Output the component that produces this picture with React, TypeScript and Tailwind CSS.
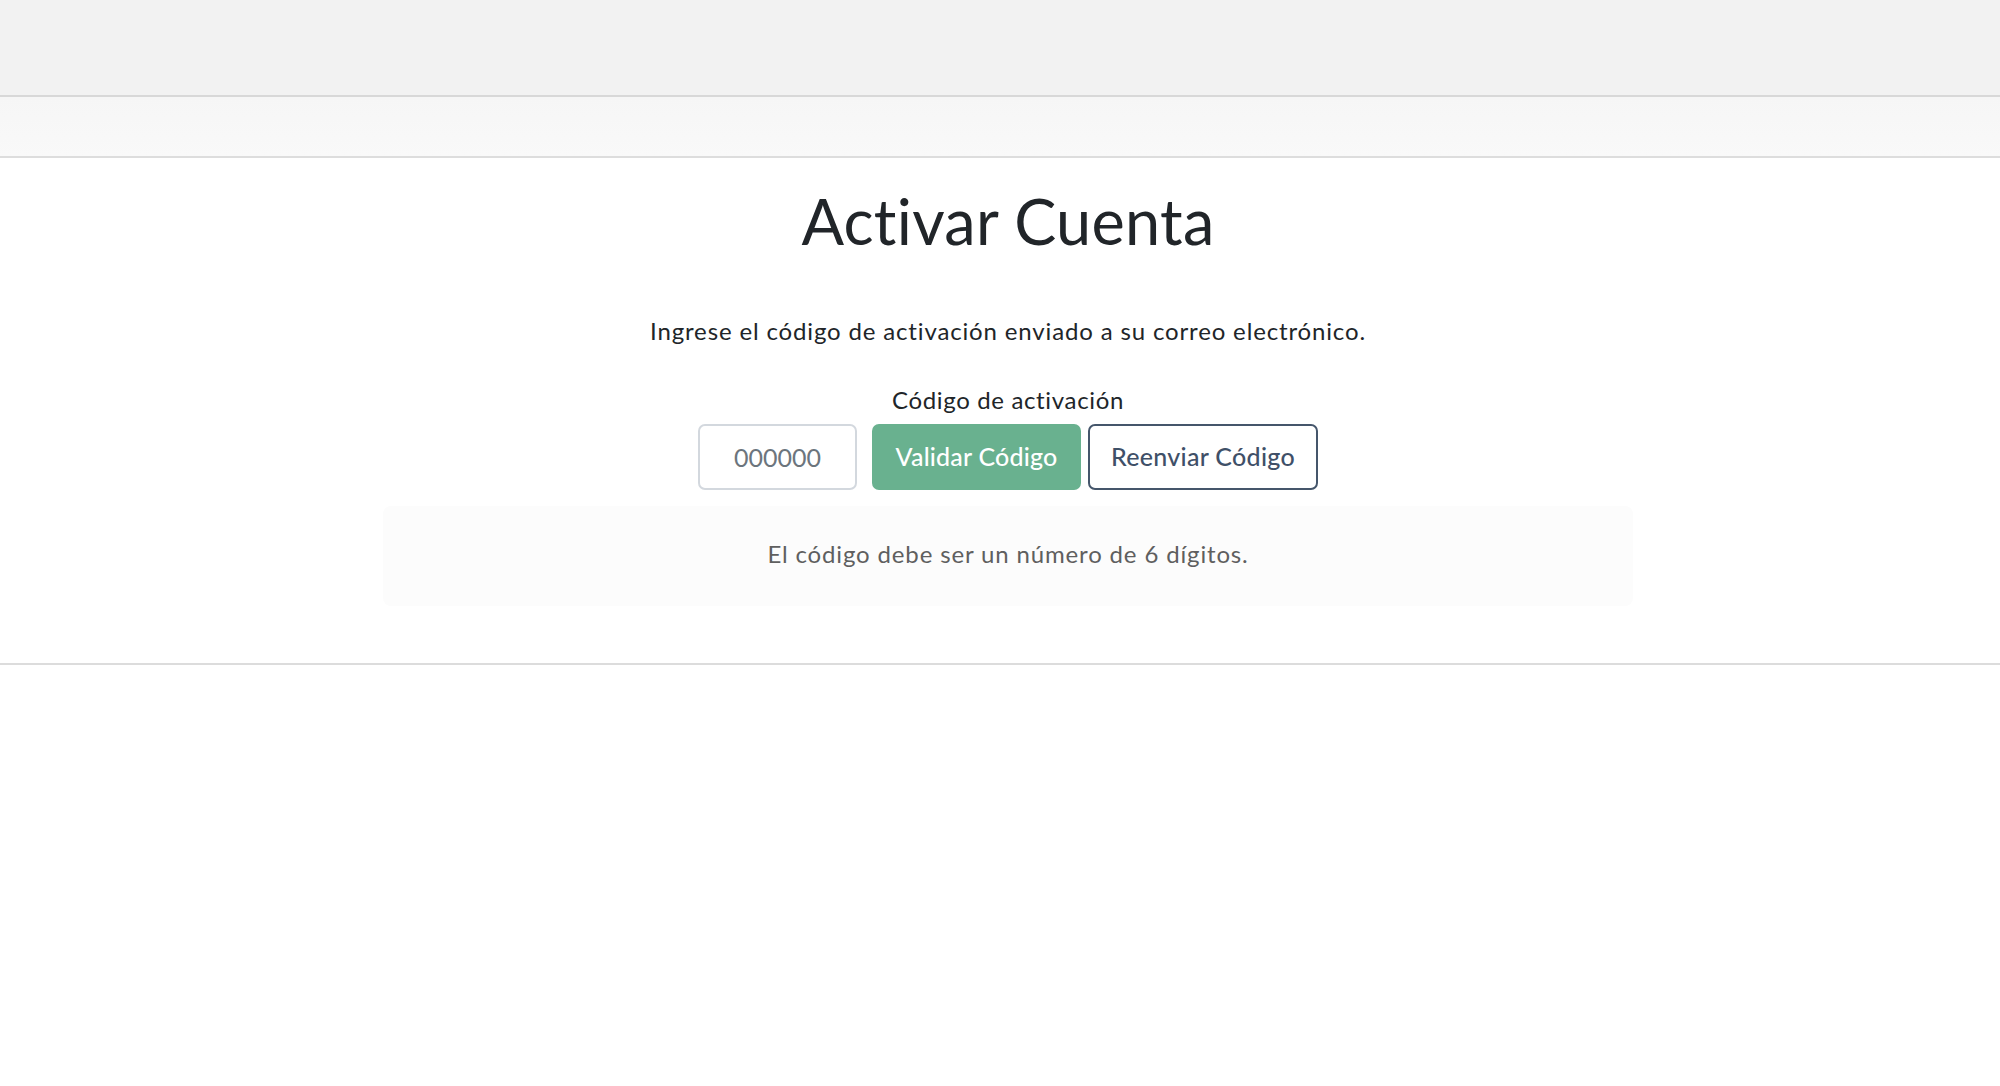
export default function App() {
  return (
    <div className="min-h-screen bg-white font-['Lato','Open_Sans',sans-serif] text-[#212529]">
      {/* Top bar */}
      <div className="h-[97px] bg-[#f2f2f2] border-b-2 border-[#d8d8d8]" />

      {/* Sub nav */}
      <div className="h-[61px] bg-gradient-to-b from-[#f6f6f6] to-[#f9f9f9] border-b-2 border-[#dddddd]" />

      {/* Content */}
      <main className="flex justify-center pl-[16px] border-b-2 border-[#dcdcdc]">
        <div className="w-[1250px] flex flex-col items-center pt-[27px] pb-[57px]">
          <h1 className="text-[63px] leading-[72px] font-normal tracking-[0.3px]">Activar Cuenta</h1>

          <p className="mt-[60px] text-[24px] leading-[28px] tracking-[0.85px]">
            Ingrese el código de activación enviado a su correo electrónico.
          </p>

          <label htmlFor="code" className="mt-[41px] text-[24px] leading-[28px] tracking-[0.65px]">
            Código de activación
          </label>

          <div className="mt-[10px] flex items-center">
            <input
              id="code"
              placeholder="000000"
              className="w-[159px] h-[66px] mr-[15px] rounded-[7px] border-2 border-[#d3d8de] bg-white text-center text-[25px] placeholder:text-[#6c757d] outline-none"
            />
            <button className="w-[209px] h-[66px] rounded-[7px] bg-[#69b18f] text-white text-[25px] font-medium tracking-[0.2px]">
              Validar Código
            </button>
            <button className="ml-[7px] w-[230px] h-[66px] rounded-[7px] border-2 border-[#45566b] bg-white text-[#3f5068] text-[25px] font-medium tracking-[0.3px]">
              Reenviar Código
            </button>
          </div>

          <div className="mt-[16px] w-full h-[100px] rounded-[8px] bg-[#fcfcfc] flex items-center justify-center pb-[4px]">
            <span className="text-[24px] tracking-[0.85px] text-[#5f5f5f]">
              El código debe ser un número de 6 dígitos.
            </span>
          </div>
        </div>
      </main>
    </div>
  );
}
